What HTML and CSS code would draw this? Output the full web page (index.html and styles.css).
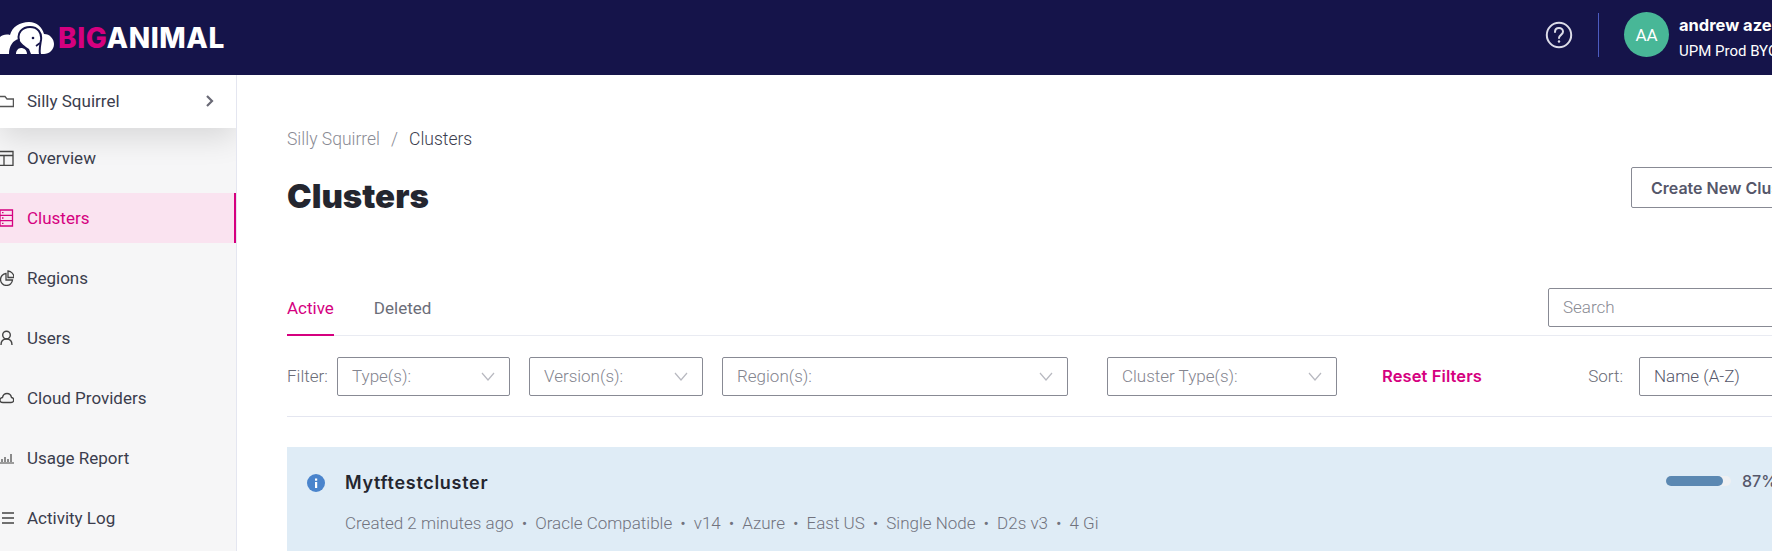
FILE: index.html
```html
<!DOCTYPE html>
<html lang="en">
<head>
  <meta charset="UTF-8" />
  <title>BigAnimal - Clusters</title>
  <link rel="stylesheet" href="styles.css">
</head>
<body>
  <header class="topbar">
    <div class="logo">
      <svg class="logo-mark" viewBox="0 0 54 34" width="54" height="34">
        <path fill="#fff" d="M0 33V16C2 14 6 13 10 14C12 6 20 1 29 1C37 1 42 6 44 13C50 13 54 18 54 23C54 29 49 33 44 33Z"/>
        <path fill="#15144a" d="M9 33C9 25 13 19 19 18C21 23 25 25 29 28L31 33H27C27 29 24 27 21 27C18 27 16 30 16 33Z"/>
        <path fill="none" stroke="#15144a" stroke-width="2" stroke-linecap="round" d="M19 19C17 12 22 6 30 6C38 6 42 12 41 19C40 25 39 29 40 33"/>
        <path fill="none" stroke="#15144a" stroke-width="1.600" d="M36 25L40 22"/>
        <circle cx="33" cy="17" r="1.300" fill="#15144a"/>
      </svg>
      <span class="logo-text"><span class="logo-big">BIG</span>ANIMAL</span>
    </div>
    <div class="topbar-right">
      <svg class="help-icon" viewBox="0 0 28 28" width="28" height="28">
        <circle cx="14" cy="14" r="12.200" fill="none" stroke="#dcdce8" stroke-width="2"/>
        <path fill="none" stroke="#dcdce8" stroke-width="2" stroke-linecap="round" d="M10 11c0-2.500 1.800-4 4-4s4 1.500 4 3.800c0 3-4 3.200-4 6.200"/>
        <circle cx="14" cy="20.500" r="1.200" fill="#dcdce8"/>
      </svg>
      <div class="divider"></div>
      <div class="avatar">AA</div>
      <div class="user">
        <div class="user-name">andrew azepeda</div>
        <div class="user-org">UPM Prod BYOA</div>
      </div>
    </div>
  </header>

  <div class="layout">
    <nav class="sidebar">
      <div class="project">
        <svg class="nav-icon" viewBox="3 0 14 14" width="14" height="14">
          <path fill="none" stroke="#555" stroke-width="1.300" d="M2 12.500V2.500h6l2 2.500h6.400v7.500z"/>
        </svg>
        <span class="project-name">Silly Squirrel</span>
        <svg class="project-arrow" viewBox="0 0 10 12" width="10" height="12">
          <path fill="none" stroke="#6a6a76" stroke-width="2.200" d="M2 1l5 5-5 5"/>
        </svg>
      </div>
      <div class="nav-list">
        <a class="nav-item">
          <svg class="nav-icon" viewBox="2 0 14 16" width="14" height="16">
            <path fill="none" stroke="#444" stroke-width="1.300" d="M1 1.500h14v14H1zM1 5.500h14M6 5.500v10"/>
          </svg>
          Overview
        </a>
        <a class="nav-item active">
          <svg class="nav-icon" viewBox="1 0 14 18" width="14" height="18">
            <path fill="none" stroke="#d5007f" stroke-width="1.300" d="M1 1h12.500v16H1zM1 6.300h12.500M1 11.700h12.500"/>
            <path stroke="#d5007f" stroke-width="1.300" d="M3 3.600h1.500M3 9h1.500M3 14.400h1.500"/>
          </svg>
          Clusters
        </a>
        <a class="nav-item">
          <svg class="nav-icon" viewBox="2 0 14 16" width="14" height="16">
            <path fill="none" stroke="#444" stroke-width="1.300" d="M8 3.500a6 6 0 1 0 6.500 6.500H8zM10 1v6.500h6A6.500 6.500 0 0 0 10 1z"/>
          </svg>
          Regions
        </a>
        <a class="nav-item">
          <svg class="nav-icon" viewBox="0 0 14 16" width="14" height="16">
            <circle cx="6.500" cy="5" r="3.800" fill="none" stroke="#444" stroke-width="1.400"/>
            <path fill="none" stroke="#444" stroke-width="1.400" d="M1 15c0-3.500 2-6 5.500-6s5.500 2.500 5.500 6"/>
          </svg>
          Users
        </a>
        <a class="nav-item">
          <svg class="nav-icon" viewBox="1 0 14 12" width="14" height="12">
            <path fill="none" stroke="#444" stroke-width="1.300" d="M4 10.500c-4 0-4-4.500-.5-5C4 3 6 1.500 8 1.500s4 1.500 4.500 4c3 .5 3 5-.5 5z"/>
          </svg>
          Cloud Providers
        </a>
        <a class="nav-item">
          <svg class="nav-icon" viewBox="0 0 14 12" width="14" height="12">
            <path stroke="#444" stroke-width="1.200" d="M0 11h14M2 10V7M5 10V5M8 10V7M11 10V2"/>
          </svg>
          Usage Report
        </a>
        <a class="nav-item">
          <svg class="nav-icon" viewBox="0 0 14 14" width="14" height="14">
            <path stroke="#444" stroke-width="1.300" d="M2 2h12M2 7h12M2 12h12"/>
          </svg>
          Activity Log
        </a>
      </div>
    </nav>

    <main class="main">
      <div class="breadcrumb">
        <span class="crumb-parent">Silly Squirrel</span>
        <span class="crumb-sep">/</span>
        <span>Clusters</span>
      </div>
      <div class="title-row">
        <h1>Clusters</h1>
        <button class="create-btn">Create New Cluster</button>
      </div>

      <div class="tabs-row">
        <div class="tab active">Active</div>
        <div class="tab">Deleted</div>
        <div class="search">Search</div>
      </div>

      <div class="filter-row">
        <span class="filter-label">Filter:</span>
        <div class="select type-select">Type(s):<svg class="chevron" viewBox="0 0 14 9" width="14" height="9"><path fill="none" stroke="#b8b9c0" stroke-width="1.200" d="M1 1l6 7 6-7"/></svg></div>
        <div class="select version-select">Version(s):<svg class="chevron" viewBox="0 0 14 9" width="14" height="9"><path fill="none" stroke="#b8b9c0" stroke-width="1.200" d="M1 1l6 7 6-7"/></svg></div>
        <div class="select region-select">Region(s):<svg class="chevron" viewBox="0 0 14 9" width="14" height="9"><path fill="none" stroke="#b8b9c0" stroke-width="1.200" d="M1 1l6 7 6-7"/></svg></div>
        <div class="select cluster-select">Cluster Type(s):<svg class="chevron" viewBox="0 0 14 9" width="14" height="9"><path fill="none" stroke="#b8b9c0" stroke-width="1.200" d="M1 1l6 7 6-7"/></svg></div>
        <a class="reset">Reset Filters</a>
        <span class="sort-label">Sort:</span>
        <div class="select sort-select">Name (A-Z)</div>
      </div>

      <div class="cluster-card">
        <svg class="info-icon" viewBox="0 0 18 18" width="18" height="18">
          <circle cx="9" cy="9" r="9" fill="#4a84cc"/>
          <rect x="8" y="8" width="2.200" height="6" fill="#fff"/>
          <rect x="8" y="4.500" width="2.200" height="2.200" fill="#fff"/>
        </svg>
        <div class="cluster-info">
          <div class="cluster-name">Mytftestcluster</div>
          <div class="cluster-meta">Created 2 minutes ago<i>•</i>Oracle Compatible<i>•</i>v14<i>•</i>Azure<i>•</i>East US<i>•</i>Single Node<i>•</i>D2s v3<i>•</i>4 Gi</div>
        </div>
        <div class="progress">
          <div class="progress-track"><div class="progress-fill" style="width: 87%"></div></div>
          <span class="progress-value">87%</span>
        </div>
      </div>
    </main>
  </div>
</body>
</html>
```

FILE: styles.css
```css
* { box-sizing: border-box; }

html {
  overflow: hidden;
  height: 100%;
}

body {
  margin: 0;
  width: 1890px;
  height: 551px;
  overflow: hidden;
  font-family: 'Roboto', sans-serif;
  font-weight: 300;
  font-size: 17px;
  color: #3b3d4d;
  background: #ffffff;
}

.topbar {
  height: 75px;
  background: #15144a;
  display: flex;
  align-items: center;
  justify-content: space-between;
  color: #ffffff;
}

.logo {
  display: flex;
  align-items: center;
  gap: 4px;
}

.logo-mark { flex: none; }

.logo-text {
  font-family: 'Inter', sans-serif;
  font-weight: 800;
  font-size: 28px;
  letter-spacing: 0.6px;
  line-height: 34px;
}

.logo-big { color: #d5007f; }

.topbar-right {
  display: flex;
  align-items: center;
  width: 345px;
  padding-bottom: 6px;
}

.help-icon {
  flex: none;
  margin-right: 25px;
}

.divider {
  width: 1px;
  height: 44px;
  background: #4c5bc0;
  margin-right: 25px;
}

.avatar {
  width: 45px;
  height: 45px;
  border-radius: 50%;
  background: #48b797;
  color: #ffffff;
  font-size: 17px;
  font-weight: 400;
  display: flex;
  align-items: center;
  justify-content: center;
  margin-right: 10px;
}

.user { margin-top: 5px; }

.user-name {
  font-family: 'Inter', sans-serif;
  font-weight: 700;
  font-size: 16.500px;
  line-height: 20px;
}

.user-org {
  font-family: 'Roboto', sans-serif;
  font-weight: 400;
  font-size: 15px;
  line-height: 18px;
  margin-top: 7px;
}

.layout {
  display: flex;
  height: 476px;
}

.sidebar {
  width: 237px;
  flex: none;
  background: #f6f6f7;
  border-right: 1px solid #e4e6f0;
  overflow: hidden;
  font-weight: 400;
}

.project {
  height: 53px;
  padding-bottom: 2px;
  background: #ffffff;
  display: flex;
  align-items: center;
  position: relative;
  box-shadow: 0 10px 30px rgba(0, 0, 0, 0.12);
}

.project-name {
  margin-left: 13px;
  flex: 1;
}

.project-arrow { margin-right: 21px; }

.nav-list {
  display: flex;
  flex-direction: column;
  gap: 10px;
  padding-top: 5px;
}

.nav-item {
  height: 50px;
  display: flex;
  align-items: center;
  gap: 13px;
}

.nav-icon { flex: none; }

.nav-item.active {
  background: #fae3f0;
  color: #d5007f;
  border-right: 2px solid #d5007f;
}

.main {
  flex: 1;
  padding: 53px 42px 0 50px;
}

.breadcrumb {
  display: flex;
  gap: 11px;
  line-height: 22px;
  font-size: 17.500px;
}

.crumb-parent, .crumb-sep { color: #8a8b94; }

.title-row {
  display: flex;
  justify-content: space-between;
  align-items: flex-start;
  margin-top: 13px;
  height: 111px;
}

h1 {
  margin: 11px 0 0;
  font-family: 'Inter', sans-serif;
  font-weight: 900;
  font-size: 33px;
  line-height: 44px;
  color: #24262f;
}

.create-btn {
  width: 217px;
  height: 41px;
  margin-top: 4px;
  padding: 0 0 0 19px;
  text-align: left;
  font-family: 'Inter', sans-serif;
  font-weight: 600;
  font-size: 16px;
  color: #55576a;
  background: #ffffff;
  border: 1px solid #888a94;
  border-radius: 2px;
}

.tabs-row {
  display: flex;
  align-items: flex-start;
  height: 62px;
  border-bottom: 1px solid #e9ebf2;
}

.tab {
  height: 62px;
  padding-top: 23px;
  margin-right: 40px;
  color: #6b6d78;
  font-weight: 400;
  line-height: 22px;
}

.tab.active {
  color: #d5007f;
  border-bottom: 2px solid #d5007f;
}

.search {
  margin-left: auto;
  margin-top: 14px;
  width: 300px;
  height: 39px;
  padding: 0 14px;
  line-height: 37px;
  color: #8a8b94;
  border: 1px solid #888a94;
  border-radius: 2px;
}

.filter-row {
  display: flex;
  align-items: center;
  height: 81px;
  border-bottom: 1px solid #e4e6f0;
}

.filter-label {
  width: 50px;
  color: #6b6d78;
}

.select {
  height: 39px;
  display: flex;
  align-items: center;
  justify-content: space-between;
  padding: 0 14px;
  color: #84858f;
  border: 1px solid #888a94;
  border-radius: 2px;
  flex: none;
}

.type-select { width: 173px; }
.version-select { width: 174px; margin-left: 19px; }
.region-select { width: 346px; margin-left: 19px; }
.cluster-select { width: 230px; margin-left: 39px; }
.sort-select { width: 209px; margin-left: 16px; color: #55576a; }

.chevron { flex: none; }

.reset {
  margin-left: 45px;
  font-family: 'Inter', sans-serif;
  font-weight: 600;
  font-size: 16.500px;
  letter-spacing: 0.1px;
  color: #d5007f;
}

.sort-label {
  margin-left: auto;
  color: #6b6d78;
}

.cluster-card {
  margin-top: 30px;
  height: 110px;
  background: #dfecf6;
  display: flex;
  align-items: flex-start;
  padding: 0 0 0 20px;
}

.info-icon {
  flex: none;
  margin-top: 27px;
  margin-right: 20px;
}

.cluster-info { flex: 1; }

.cluster-name {
  margin-top: 24px;
  font-family: 'Inter', sans-serif;
  font-weight: 600;
  font-size: 18px;
  letter-spacing: 0.7px;
  line-height: 24px;
  color: #24262f;
}

.cluster-meta {
  margin-top: 17px;
  color: #71737e;
  line-height: 22px;
}

.cluster-meta i {
  font-style: normal;
  margin: 0 8px;
}

.progress {
  display: flex;
  align-items: center;
  gap: 11px;
  margin-top: 24px;
  width: 182px;
}

.progress-track {
  width: 65px;
  height: 10px;
  border-radius: 5px;
  background: #eef0f3;
  flex: none;
}

.progress-fill {
  height: 100%;
  border-radius: 5px;
  background: #5b88b2;
}

.progress-value {
  font-family: 'Inter', sans-serif;
  font-weight: 500;
  font-size: 16px;
  color: #55576a;
}
```
